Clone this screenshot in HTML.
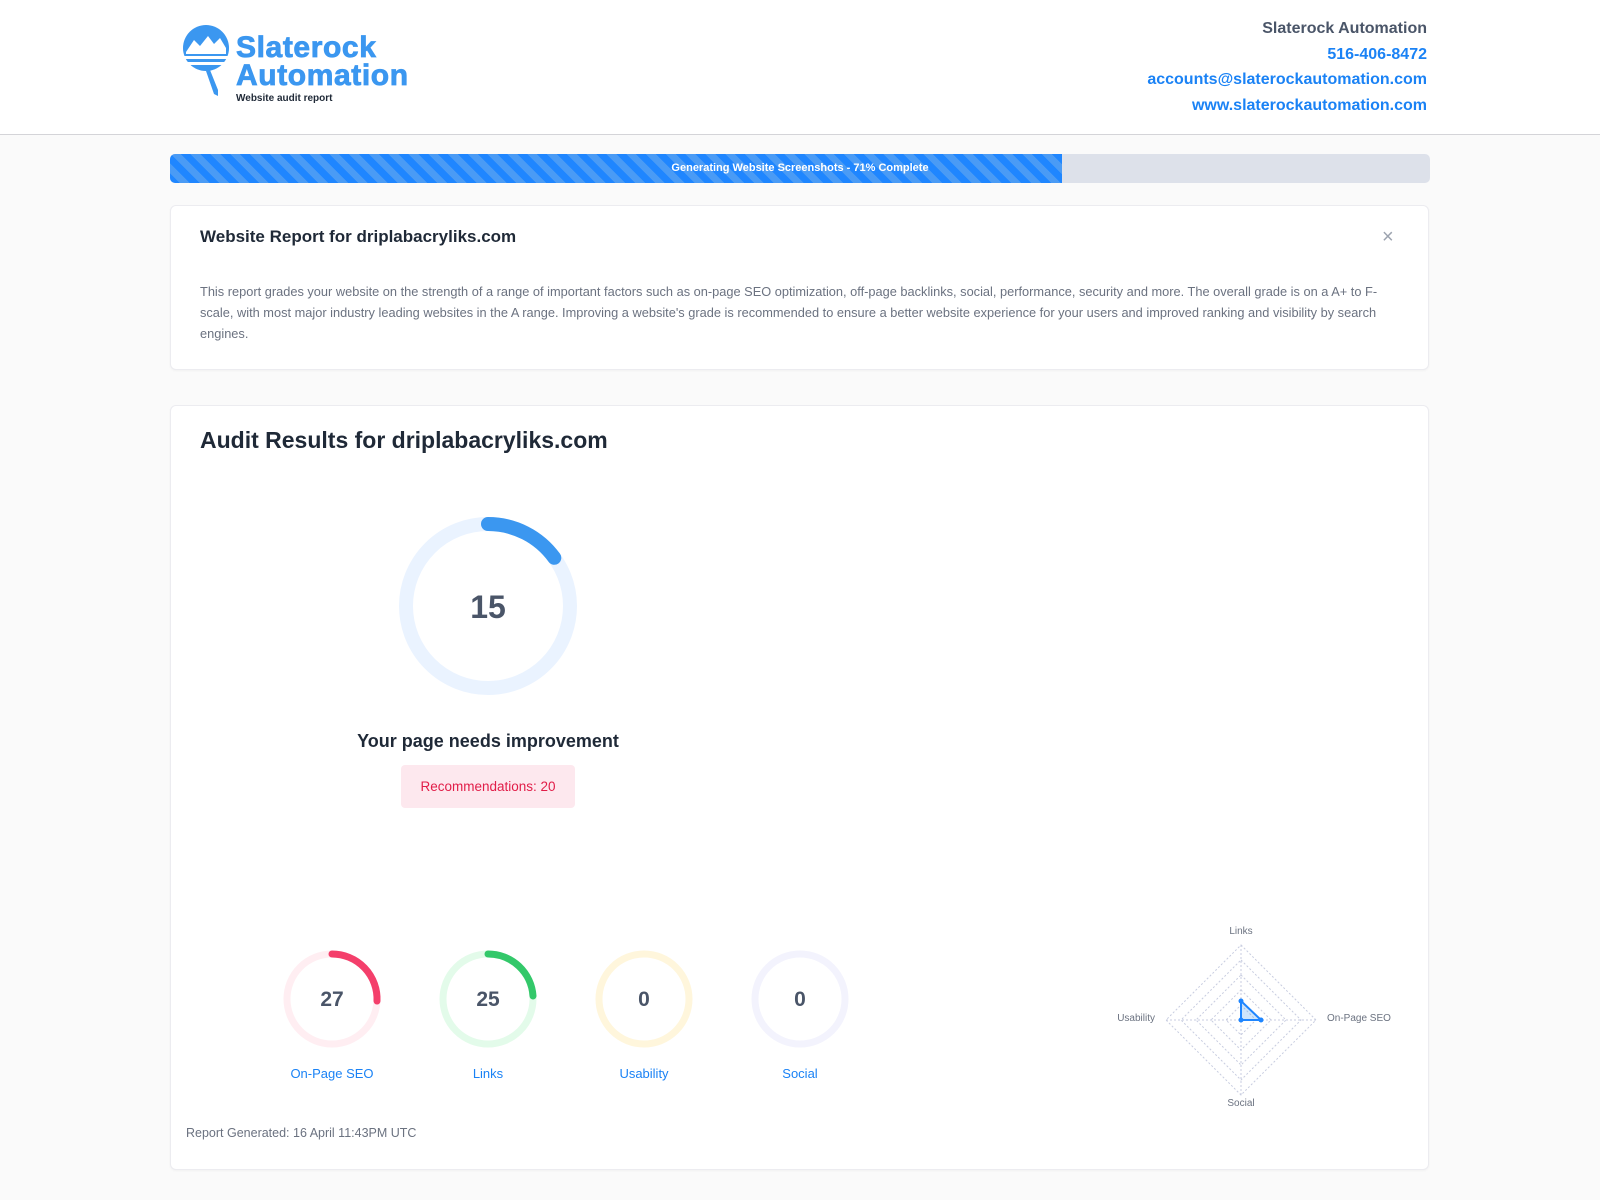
<!DOCTYPE html>
<html><head><meta charset="utf-8"><style>
*{margin:0;padding:0;box-sizing:border-box}
body{width:1600px;height:1200px;background:#fafafa;font-family:"Liberation Sans",sans-serif;position:relative;overflow:hidden}
.abs{position:absolute}
.hdr{left:0;top:0;width:1600px;height:135px;background:#fff;border-bottom:1px solid #d4d4d8}
.card{background:#fff;border:1px solid #ececf0;border-radius:6px;box-shadow:0 1px 2px rgba(0,0,0,.04)}
.ct{right:173px;text-align:right;font-size:16px;font-weight:bold;color:#1a82f5;white-space:nowrap}
.lbl{font-size:13px;color:#1a82f5;text-align:center;width:140px}
</style></head><body>
<div class="abs hdr"></div>
<svg class="abs" style="left:178px;top:22px" width="60" height="80" viewBox="0 0 60 80">
<circle cx="28" cy="26" r="23" fill="#3b97f0"/>
<path d="M8 30 L16 18 L22 24 L30 14 L36 22 L42 16 L48 26 L48 32 L8 32Z" fill="#fff"/>
<rect x="5" y="34" width="46" height="3" fill="#fff"/>
<rect x="5" y="40" width="46" height="3" fill="#fff"/>
<path d="M28 49 L36 72 L40 74 L40 68 L32 48Z" fill="#3b97f0"/>
</svg>
<div class="abs" style="left:236px;top:34px;font-size:30px;font-weight:bold;color:#3b97f0;line-height:28px;letter-spacing:0.6px;-webkit-text-stroke:0.8px #3b97f0">Slaterock<br>Automation</div>
<div class="abs" style="left:236px;top:93px;font-size:10px;font-weight:bold;color:#1f2937">Website audit report</div>
<div class="abs ct" style="top:20px;color:#4a5568">Slaterock Automation</div>
<div class="abs ct" style="top:46px">516-406-8472</div>
<div class="abs ct" style="top:71px">accounts@slaterockautomation.com</div>
<div class="abs ct" style="top:97px">www.slaterockautomation.com</div>

<div class="abs" style="left:170px;top:154px;width:1260px;height:29px;background:#dde1ea;border-radius:5px;overflow:hidden">
<div style="width:892px;height:29px;background:repeating-linear-gradient(45deg,#1f86ff 0 7px,#4a9bf5 7px 14px)"></div>
<div class="abs" style="left:0;top:0;width:1260px;color:#fff;font-size:11px;font-weight:bold;text-align:center;line-height:29px">Generating Website Screenshots - 71% Complete</div></div>

<div class="abs card" style="left:170px;top:205px;width:1259px;height:165px"></div>
<div class="abs" style="left:200px;top:227px;font-size:17px;font-weight:bold;color:#1f2937">Website Report for driplabacryliks.com</div>
<div class="abs" style="left:1382px;top:226px;font-size:20px;color:#9ca3af">×</div>
<div class="abs" style="left:200px;top:281px;width:1200px;font-size:12.8px;line-height:21px;color:#6b7280">This report grades your website on the strength of a range of important factors such as on-page SEO optimization, off-page backlinks, social, performance, security and more. The overall grade is on a A+ to F-scale, with most major industry leading websites in the A range. Improving a website's grade is recommended to ensure a better website experience for your users and improved ranking and visibility by search engines.</div>

<div class="abs card" style="left:170px;top:405px;width:1259px;height:765px"></div>
<div class="abs" style="left:200px;top:427px;font-size:23px;font-weight:bold;color:#1f2937">Audit Results for driplabacryliks.com</div>

<svg class="abs" style="left:0;top:0" width="1600" height="1200">
<circle cx="488" cy="606" r="82" fill="none" stroke="#eaf3ff" stroke-width="14"/>
<path d="M488 524 A82 82 0 0 1 554.3 557.8" fill="none" stroke="#3b97f0" stroke-width="14" stroke-linecap="round"/>
<text x="488" y="618" text-anchor="middle" font-family="Liberation Sans" font-weight="bold" font-size="32" fill="#4a5568">15</text>
<g font-family="Liberation Sans" font-weight="bold" font-size="21" fill="#4a5568" text-anchor="middle">
<circle cx="332" cy="999" r="45" fill="none" stroke="#ffeef2" stroke-width="7"/>
<path d="M332 954 A45 45 0 0 1 377 1001" fill="none" stroke="#f43f6b" stroke-width="7" stroke-linecap="round"/>
<text x="332" y="1006">27</text>
<circle cx="488" cy="999" r="45" fill="none" stroke="#e3fbea" stroke-width="7"/>
<path d="M488 954 A45 45 0 0 1 533 996" fill="none" stroke="#33c86a" stroke-width="7" stroke-linecap="round"/>
<text x="488" y="1006">25</text>
<circle cx="644" cy="999" r="45" fill="none" stroke="#fff6dc" stroke-width="7"/>
<text x="644" y="1006">0</text>
<circle cx="800" cy="999" r="45" fill="none" stroke="#f3f3fd" stroke-width="7"/>
<text x="800" y="1006">0</text>
</g>
<g fill="none" stroke="#c8cde0" stroke-width="1" stroke-dasharray="2 2">
<path d="M1241 945 L1316 1020 L1241 1095 L1166 1020Z"/>
<path d="M1241 960 L1301 1020 L1241 1080 L1181 1020Z"/>
<path d="M1241 975 L1286 1020 L1241 1065 L1196 1020Z"/>
<path d="M1241 990 L1271 1020 L1241 1050 L1211 1020Z"/>
<path d="M1241 1005 L1256 1020 L1241 1035 L1226 1020Z"/>
<path d="M1241 945 L1241 1095 M1166 1020 L1316 1020"/>
</g>
<path d="M1241 1001 L1261 1020 L1241 1020Z" fill="rgba(59,151,240,.25)" stroke="#1f86ff" stroke-width="2"/>
<g fill="#1f86ff"><circle cx="1241" cy="1001" r="2.5"/><circle cx="1261" cy="1020" r="2.5"/><circle cx="1241" cy="1020" r="2.5"/></g>
<g font-family="Liberation Sans" font-size="10" fill="#6b7280">
<text x="1241" y="934" text-anchor="middle">Links</text>
<text x="1155" y="1021" text-anchor="end">Usability</text>
<text x="1327" y="1021">On-Page SEO</text>
<text x="1241" y="1106" text-anchor="middle">Social</text>
</g>
</svg>
<div class="abs" style="left:288px;top:731px;width:400px;text-align:center;font-size:18px;font-weight:bold;color:#1f2937">Your page needs improvement</div>
<div class="abs" style="left:401px;top:765px;width:174px;height:43px;background:#fde8ee;border-radius:4px;color:#e11d48;font-size:13.5px;text-align:center;line-height:43px">Recommendations: 20</div>
<div class="abs lbl" style="left:262px;top:1066px">On-Page SEO</div>
<div class="abs lbl" style="left:418px;top:1066px">Links</div>
<div class="abs lbl" style="left:574px;top:1066px">Usability</div>
<div class="abs lbl" style="left:730px;top:1066px">Social</div>
<div class="abs" style="left:186px;top:1126px;font-size:12.5px;color:#6b7280">Report Generated: 16 April 11:43PM UTC</div>
</body></html>
